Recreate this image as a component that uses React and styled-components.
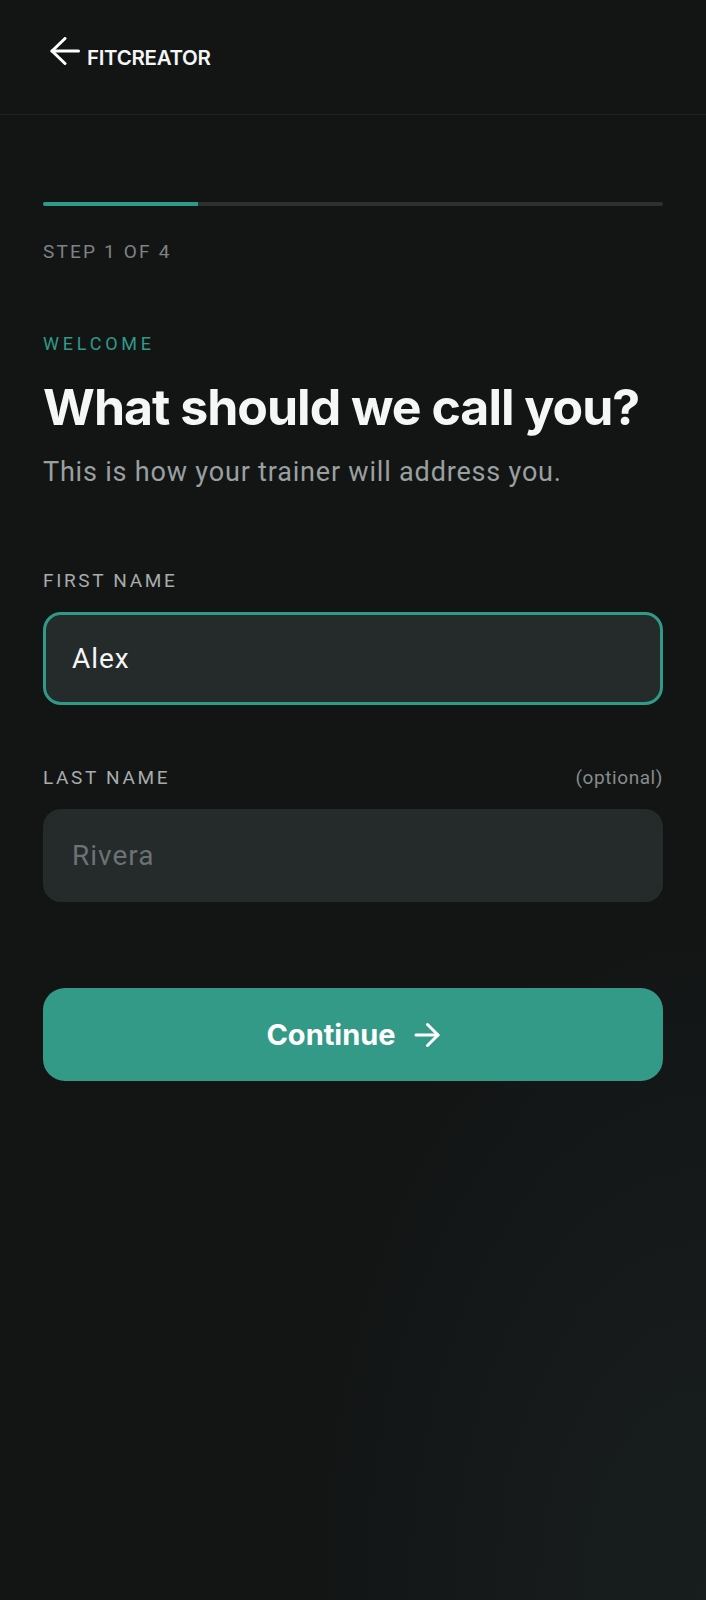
import React from "react";
import styled, { createGlobalStyle } from "styled-components";

const Global = createGlobalStyle`
  html, body { margin: 0; padding: 0; background: #131515; }
  body { font-family: Roboto, "Liberation Sans", sans-serif; -webkit-font-smoothing: antialiased; }
  * { box-sizing: border-box; }
`;

const Page = styled.div`
  min-height: 1600px;
  background:
    radial-gradient(ellipse 60% 45% at 100% 100%, rgba(30, 40, 40, 0.45), rgba(19, 21, 21, 0) 100%),
    #131515;
  color: #fff;
`;

const Header = styled.header`
  height: 115px;
  border-bottom: 1px solid #1e2222;
  display: flex;
  align-items: flex-end;
  padding: 0 50px 47px;
  gap: 7px;
`;

const BackButton = styled.button`
  background: none;
  border: 0;
  padding: 0;
  display: flex;
  color: #fff;
  cursor: pointer;
`;

const Brand = styled.span`
  font-family: Inter, "Noto Sans", sans-serif;
  font-weight: 600;
  font-size: 20.5px;
  letter-spacing: -0.015em;
  line-height: 20px;
  color: #f4f5f5;
  margin-bottom: -1px;
`;

const Main = styled.main`
  padding: 87px 43px 0;
  display: flex;
  flex-direction: column;
`;

const Track = styled.div`
  height: 4px;
  border-radius: 2px;
  background: #2b3030;
  overflow: hidden;
`;

const Fill = styled.div`
  height: 100%;
  background: #2f9a87;
`;

const Eyebrow = styled.div`
  font-size: ${(p) => p.$size || 19}px;
  line-height: 20px;
  letter-spacing: ${(p) => p.$spacing || "0.115em"};
  text-transform: uppercase;
  color: ${(p) => p.$color || "#7d8384"};
  margin-top: ${(p) => p.$top || 0}px;
`;

const Title = styled.h1`
  font-family: Inter, "Noto Sans", sans-serif;
  font-weight: 700;
  font-size: 50px;
  line-height: 56px;
  letter-spacing: -0.02em;
  color: #f5f6f6;
  margin: 25px 0 0;
`;

const Subtitle = styled.p`
  font-size: 27px;
  line-height: 32px;
  letter-spacing: 0.03em;
  color: #9aa0a0;
  margin: 21px 0 0;
`;

const Field = styled.div`
  display: flex;
  flex-direction: column;
  gap: 21px;
  margin-top: ${(p) => p.$top}px;
`;

const LabelRow = styled.div`
  display: flex;
  justify-content: space-between;
  align-items: baseline;
`;

const Label = styled.label`
  font-size: 19px;
  line-height: 20px;
  font-weight: 400;
  letter-spacing: 0.14em;
  text-transform: uppercase;
  color: #a7acac;
`;

const Optional = styled.span`
  font-size: 19px;
  line-height: 20px;
  letter-spacing: 0.03em;
  color: #868c8c;
`;

const Input = styled.input`
  height: 93px;
  width: 100%;
  border-radius: 18px;
  border: 3px solid ${(p) => (p.$focused ? "#2f9a87" : "#252a2b")};
  background: #252a2b;
  padding: 0 26px;
  font-family: Roboto, "Liberation Sans", sans-serif;
  font-size: 28px;
  letter-spacing: 0.035em;
  color: #f5f6f6;
  outline: none;
  &::placeholder { color: #6b7273; }
`;

const PrimaryButton = styled.button`
  margin-top: 86px;
  height: 93px;
  border: 0;
  border-radius: 22px;
  background: #349a88;
  color: #fff;
  font-family: Inter, "Noto Sans", sans-serif;
  font-weight: 700;
  font-size: 29px;
  letter-spacing: 0;
  display: flex;
  align-items: center;
  justify-content: center;
  gap: 18px;
  cursor: pointer;
`;

const LeftArrow = () => (
  <svg width="30" height="30" viewBox="0 0 30 30" fill="none" stroke="currentColor" strokeWidth="3" strokeLinecap="round" strokeLinejoin="round">
    <path d="M28.5 14H2" />
    <path d="M15 1.5 2 14l13 12.5" />
  </svg>
);

const RightArrow = () => (
  <svg width="26" height="26" viewBox="0 0 26 26" fill="none" stroke="currentColor" strokeWidth="3" strokeLinecap="round" strokeLinejoin="round">
    <path d="M2 13h22" />
    <path d="M13.5 2.5 24 13 13.5 23.5" />
  </svg>
);

export default function App() {
  const progress = 25;
  return (
    <>
      <Global />
      <Page>
        <Header>
          <BackButton aria-label="Back">
            <LeftArrow />
          </BackButton>
          <Brand>FITCREATOR</Brand>
        </Header>
        <Main>
          <Track>
            <Fill style={{ width: `${progress}%` }} />
          </Track>
          <Eyebrow $top={36}>Step 1 of 4</Eyebrow>
          <Eyebrow $top={72} $size={18} $spacing="0.21em" $color="#2f9a87">Welcome</Eyebrow>
          <Title>What should we call you?</Title>
          <Subtitle>This is how your trainer will address you.</Subtitle>
          <Field $top={83}>
            <LabelRow>
              <Label>First name</Label>
            </LabelRow>
            <Input $focused defaultValue="Alex" />
          </Field>
          <Field $top={63}>
            <LabelRow>
              <Label>Last name</Label>
              <Optional>(optional)</Optional>
            </LabelRow>
            <Input placeholder="Rivera" />
          </Field>
          <PrimaryButton>
            Continue
            <RightArrow />
          </PrimaryButton>
        </Main>
      </Page>
    </>
  );
}
